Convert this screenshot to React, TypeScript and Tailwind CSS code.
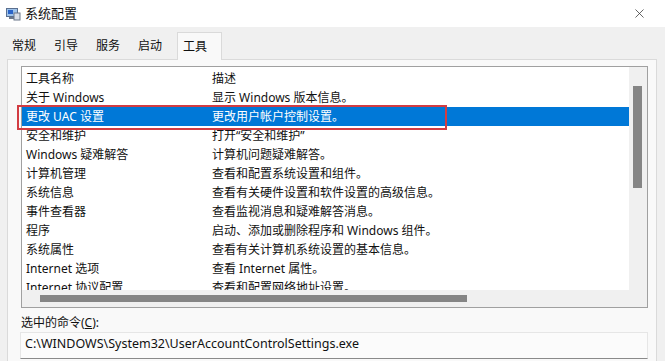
import { X } from 'lucide-react'

const rows: [string, string][] = [
  ['关于 Windows', '显示 Windows 版本信息。'],
  ['更改 UAC 设置', '更改用户帐户控制设置。'],
  ['安全和维护', '打开“安全和维护”'],
  ['Windows 疑难解答', '计算机问题疑难解答。'],
  ['计算机管理', '查看和配置系统设置和组件。'],
  ['系统信息', '查看有关硬件设置和软件设置的高级信息。'],
  ['事件查看器', '查看监视消息和疑难解答消息。'],
  ['程序', '启动、添加或删除程序和 Windows 组件。'],
  ['系统属性', '查看有关计算机系统设置的基本信息。'],
  ['Internet 选项', '查看 Internet 属性。'],
  ['Internet 协议配置', '查看和配置网络地址设置。'],
]

const tabs = ['常规', '引导', '服务', '启动']

function AppIcon() {
  return (
    <svg width="16" height="16" viewBox="0 0 16 16">
      <rect x="1" y="2" width="12" height="9" fill="#5a6f8f" />
      <rect x="2" y="3" width="10" height="7" fill="#9fc3ea" />
      <rect x="3" y="4" width="5" height="4" fill="#2a64c8" />
      <rect x="9" y="7" width="6" height="7" fill="#d8dde6" stroke="#6b7789" strokeWidth="1" />
      <rect x="4" y="11" width="5" height="2" fill="#6b7789" />
    </svg>
  )
}

export default function App() {
  const font = { fontFamily: '"Noto Sans", "Noto Sans CJK SC", sans-serif' }
  return (
    <div className="relative w-[665px] h-[361px] overflow-hidden bg-[#f0f0f0] text-[#111]" style={font}>
      {/* title bar */}
      <div className="h-[27px] bg-white flex items-center pl-[5px] pr-[18px]">
        <AppIcon />
        <span className="ml-[4px] text-[13px] leading-none">系统配置</span>
        <X className="ml-auto text-[#333]" size={15} strokeWidth={1.2} />
      </div>

      {/* tabs */}
      <div className="h-[32px] flex items-end pl-[7px]">
        {tabs.map(t => (
          <div key={t} className="w-[42px] h-[25px] pl-[5px] pt-[4px] text-[12px] leading-[16px]">
            {t}
          </div>
        ))}
        <div className="ml-[2px] w-[45px] h-[28px] pl-[5px] pt-[6px] text-[12px] leading-[16px] bg-[#f9f9f9] border border-b-0 border-[#dadada] -mb-px relative z-10">
          工具
        </div>
      </div>

      {/* panel */}
      <div className="ml-[7px] w-[650px] h-[310px] bg-[#f9f9f9] border border-[#dadada] pl-[13px] pt-[6px]">
        <div className="w-[627px] h-[242px] border border-[#a0a0a0] bg-white flex flex-col">
          <div className="flex h-[223px]">
            <div className="flex-1 overflow-hidden pt-[2px] text-[12px]">
              <div className="flex h-[19px] items-center">
                <div className="w-[190px] pl-[4px]">工具名称</div>
                <div>描述</div>
              </div>
              {rows.map(([name, desc], i) => (
                <div
                  key={name}
                  className={`flex h-[19px] items-center whitespace-nowrap ${i === 1 ? 'bg-[#0078d7] text-white' : ''}`}
                >
                  <div className="w-[190px] pl-[4px]">{name}</div>
                  <div>{desc}</div>
                </div>
              ))}
            </div>
            <div className="w-[18px] bg-[#f0f0f0] pt-[19px] pl-[4px]">
              <div className="w-[9px] h-[102px] bg-[#858585]" />
            </div>
          </div>
          <div className="flex h-[17px] bg-[#f0f0f0]">
            <div className="pt-[5px] pl-[18px]">
              <div className="w-[427px] h-[7px] bg-[#858585]" />
            </div>
          </div>
        </div>

        <div className="mt-[7px] text-[12px] leading-[16px]">
          选中的命令(<span className="underline">C</span>):
        </div>

        <div className="mt-[1px] -ml-px w-[628px] h-[27px] bg-[#fbfbfb] border border-[#e6e6e6] border-b-[#8a8a8a] pl-[4px] pt-[2px] text-[12.5px] leading-[18px]">
          C:\WINDOWS\System32\UserAccountControlSettings.exe
        </div>
      </div>

      {/* red annotation box */}
      <div className="absolute left-[17px] top-[105px] w-[430px] h-[25px] border-2 border-[#d23c42]" />
    </div>
  )
}
